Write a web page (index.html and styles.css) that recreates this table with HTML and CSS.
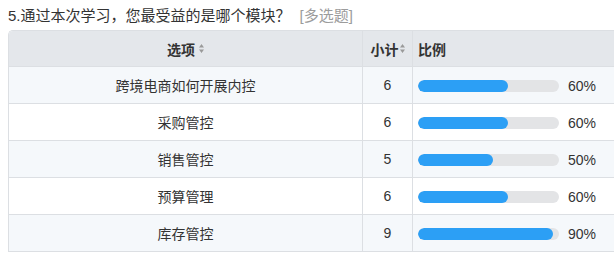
FILE: index.html
```html
<!DOCTYPE html>
<html lang="zh">
<head>
<meta charset="utf-8">
<title>问卷统计</title>
<link rel="stylesheet" href="styles.css">
</head>
<body>
<div class="question">5.通过本次学习，您最受益的是哪个模块？<span class="qtype">[多选题]</span></div>
<div class="table">
  <div class="row head">
    <div class="cell c1">选项<svg class="sort" width="5" height="9" viewBox="0 0 5 9"><path d="M2.5 0 L5 3.5 L0 3.5 Z M2.5 9 L5 5.5 L0 5.5 Z" fill="#9a9a9a"/></svg></div>
    <div class="cell c2">小计<svg class="sort" width="5" height="9" viewBox="0 0 5 9"><path d="M2.5 0 L5 3.5 L0 3.5 Z M2.5 9 L5 5.5 L0 5.5 Z" fill="#9a9a9a"/></svg></div>
    <div class="cell c3">比例</div>
  </div>
  <div class="row alt">
    <div class="cell c1">跨境电商如何开展内控</div>
    <div class="cell c2">6</div>
    <div class="cell c3"><div class="track"><div class="fill" style="width:90px"></div></div><span class="pct">60%</span></div>
  </div>
  <div class="row">
    <div class="cell c1">采购管控</div>
    <div class="cell c2">6</div>
    <div class="cell c3"><div class="track"><div class="fill" style="width:90px"></div></div><span class="pct">60%</span></div>
  </div>
  <div class="row alt">
    <div class="cell c1">销售管控</div>
    <div class="cell c2">5</div>
    <div class="cell c3"><div class="track"><div class="fill" style="width:75px"></div></div><span class="pct">50%</span></div>
  </div>
  <div class="row">
    <div class="cell c1">预算管理</div>
    <div class="cell c2">6</div>
    <div class="cell c3"><div class="track"><div class="fill" style="width:90px"></div></div><span class="pct">60%</span></div>
  </div>
  <div class="row alt">
    <div class="cell c1">库存管控</div>
    <div class="cell c2">9</div>
    <div class="cell c3"><div class="track"><div class="fill" style="width:135px"></div></div><span class="pct">90%</span></div>
  </div>
</div>
</body>
</html>
```

FILE: styles.css
```css
html, body {
  margin: 0;
  padding: 0;
  overflow: hidden;
  background: #ffffff;
}
body {
  font-family: "Liberation Sans", "Noto Sans CJK SC", sans-serif;
  font-size: 14px;
  color: #333333;
}
.question {
  margin: 5px 0 0 8px;
  font-size: 15px;
  line-height: 21px;
  white-space: nowrap;
}
.qtype {
  color: #9c9c9c;
  margin-left: 9px;
}
.table {
  margin: 4px 0 0 8px;
  width: 606px;
  border-left: 1px solid #dcdfe3;
  border-top: 1px solid #dcdfe3;
  border-top-left-radius: 5px;
  overflow: hidden;
}
.row {
  display: grid;
  grid-template-columns: 354px 50px 1fr;
  height: 37px;
  background: #ffffff;
}
.row.alt {
  background: #f5f8fb;
}
.row.head {
  height: 36px;
  background: #e4e7eb;
  font-weight: bold;
}
.cell {
  box-sizing: border-box;
  border-right: 1px solid #dcdfe3;
  border-bottom: 1px solid #dcdfe3;
  display: flex;
  align-items: center;
  padding: 0 5px;
  white-space: nowrap;
}
.c1, .c2 {
  justify-content: center;
}
.c2 {
  padding: 0;
}
.c3 {
  border-right: none;
}
.sort {
  margin-left: 4px;
  flex: none;
}
.c2 .sort {
  margin-left: 1px;
}
.track {
  width: 141px;
  height: 12px;
  border-radius: 6px;
  background: #e3e4e6;
  overflow: hidden;
  margin-top: 2px;
}
.fill {
  height: 12px;
  border-radius: 6px;
  background: #2c9ff5;
}
.pct {
  margin-left: 9px;
  margin-top: 2px;
}
```
